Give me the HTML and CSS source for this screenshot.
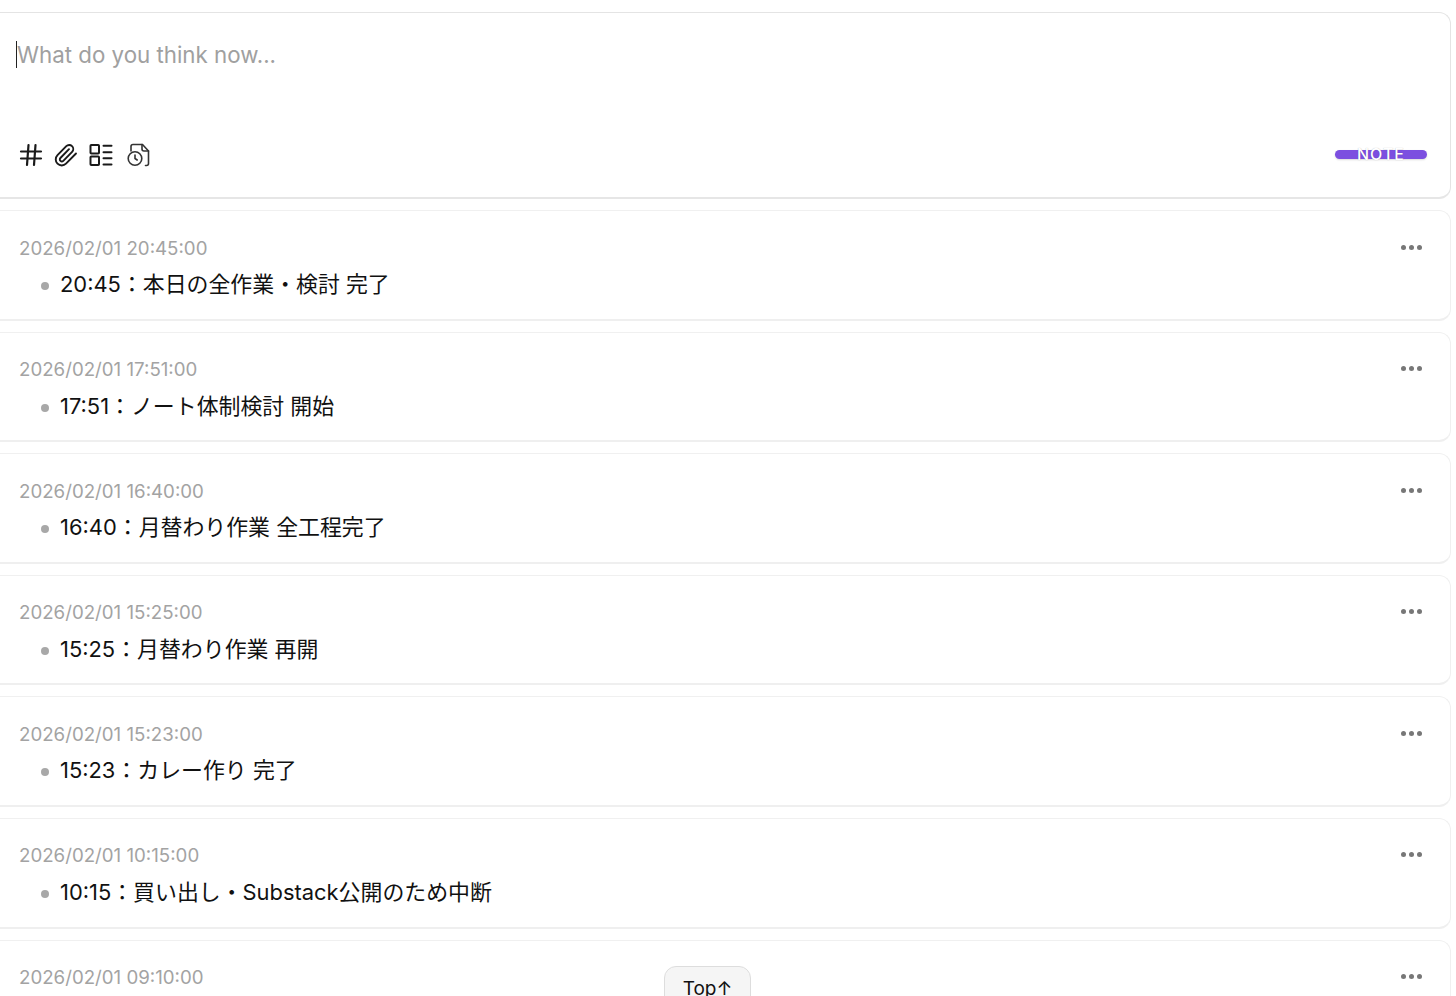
FILE: index.html
```html
<!DOCTYPE html>
<html lang="ja">
<head>
  <meta charset="UTF-8">
  <title>Notes</title>
  <link rel="stylesheet" href="styles.css">
</head>
<body>
  <div class="page">
    <div class="editor">
      <div class="editor-input"><span class="caret"></span><span class="placeholder">What do you think now...</span></div>
      <div class="editor-bar">
        <div class="tools">
          <svg class="tool" viewBox="0 0 24 24" fill="none" stroke="#1a1a1a" stroke-width="2.200" stroke-linecap="round"><path d="M9.500 2 8 22M16.500 2 15 22M2 8.500h20M2 15.500h20"/></svg>
          <svg class="tool" viewBox="0 0 24 24" fill="none" stroke="#1a1a1a" stroke-width="1.900" stroke-linecap="round" stroke-linejoin="round"><path d="m22 10.500-10 10.200a6 6 0 0 1-8.500-8.500l8.800-9a4 4 0 1 1 5.800 5.600l-8.800 9a2 2 0 0 1-2.900-2.800l8.600-8.800"/></svg>
          <svg class="tool" viewBox="0 0 24 24" fill="none" stroke="#1a1a1a" stroke-width="2" stroke-linecap="round"><rect x="1.500" y="2" width="8.500" height="8.500" rx=".8"/><rect x="1.500" y="13.500" width="8.500" height="8.500" rx=".8"/><path d="M14.500 2.800h8M14.500 9.300h8M14.500 15.300h8M14.500 21.500h8"/></svg>
          <svg class="tool tool-file" viewBox="0 0 24 24" fill="none" stroke="#333" stroke-width="1.600" stroke-linecap="round" stroke-linejoin="round"><path d="M4 8V3.500c0-1.200.8-2 2-2h9.500l6 6.500v12.500c0 1.200-.8 2-2 2h-1"/><path d="M15 1.500v4.500c0 1.200.8 2 2 2h4.500"/><circle cx="8" cy="15.500" r="6.800"/><path d="M8 12v3.500l2.200 1.500"/></svg>
        </div>
        <button class="note-btn">NOTE</button>
      </div>
    </div>

    <div class="memo">
      <div class="memo-head"><span class="memo-date">2026/02/01 20:45:00</span><span class="dots"><i></i><i></i><i></i></span></div>
      <ul class="memo-body"><li>20:45：本日の全作業・検討 完了</li></ul>
    </div>
    <div class="memo">
      <div class="memo-head"><span class="memo-date">2026/02/01 17:51:00</span><span class="dots"><i></i><i></i><i></i></span></div>
      <ul class="memo-body"><li>17:51：ノート体制検討 開始</li></ul>
    </div>
    <div class="memo">
      <div class="memo-head"><span class="memo-date">2026/02/01 16:40:00</span><span class="dots"><i></i><i></i><i></i></span></div>
      <ul class="memo-body"><li>16:40：月替わり作業 全工程完了</li></ul>
    </div>
    <div class="memo">
      <div class="memo-head"><span class="memo-date">2026/02/01 15:25:00</span><span class="dots"><i></i><i></i><i></i></span></div>
      <ul class="memo-body"><li>15:25：月替わり作業 再開</li></ul>
    </div>
    <div class="memo">
      <div class="memo-head"><span class="memo-date">2026/02/01 15:23:00</span><span class="dots"><i></i><i></i><i></i></span></div>
      <ul class="memo-body"><li>15:23：カレー作り 完了</li></ul>
    </div>
    <div class="memo">
      <div class="memo-head"><span class="memo-date">2026/02/01 10:15:00</span><span class="dots"><i></i><i></i><i></i></span></div>
      <ul class="memo-body"><li>10:15：買い出し・Substack公開のため中断</li></ul>
    </div>
    <div class="memo">
      <div class="memo-head"><span class="memo-date">2026/02/01 09:10:00</span><span class="dots"><i></i><i></i><i></i></span></div>
    </div>
  </div>
  <button class="top-btn">Top↑</button>
</body>
</html>
```

FILE: styles.css
```css
html, body {
  margin: 0;
  padding: 0;
  height: 996px;
  overflow: hidden;
  background: #fff;
  font-family: Inter, "Noto Sans CJK JP", sans-serif;
  color: #111;
}
.page {
  display: flex;
  flex-direction: column;
  gap: 11px;
  width: 1471px;
  margin-left: -20px;
  padding-top: 12px;
}
.editor {
  height: 187px;
  box-sizing: border-box;
  flex-shrink: 0;
  background: #fff;
  border: 1px solid #e4e4e4;
  border-bottom: 2px solid #e6e6e6;
  border-radius: 12px;
  padding: 23px 23px 0 35px;
}
.editor-input {
  display: flex;
  align-items: center;
  height: 36px;
  font-size: 22.300px;
}
.caret {
  width: 1px;
  height: 27px;
  background: #222;
}
.placeholder {
  color: #a0a0a0;
}
.editor-bar {
  display: flex;
  justify-content: space-between;
  align-items: center;
  margin-top: 71px;
}
.tools {
  display: flex;
  align-items: center;
  gap: 11px;
  padding-left: 3px;
}
.tool {
  width: 24px;
  height: 24px;
  display: block;
}
.tool-file {
  margin-left: 3px;
}
.note-btn {
  width: 92px;
  height: 9px;
  margin-bottom: 2px;
  padding: 0;
  border: 0;
  border-radius: 5px;
  background: #7c4fe0;
  color: #fff;
  font-family: inherit;
  font-size: 16px;
  font-weight: 500;
  letter-spacing: 1px;
  line-height: 9px;
  overflow: visible;
  text-shadow: 0 0 1px rgba(0, 0, 0, 0.3);
  box-shadow: 0 1px 2px rgba(0, 0, 0, 0.15);
}
.memo {
  height: 110.600px;
  box-sizing: border-box;
  flex-shrink: 0;
  background: #fff;
  border: 1px solid #f0f0f0;
  border-bottom: 2px solid #efefef;
  border-radius: 12px;
  padding: 24px 28px 0 38px;
}
.memo-head {
  display: flex;
  justify-content: space-between;
  align-items: center;
  height: 24px;
}
.memo-date {
  padding-top: 2px;
  font-size: 18.700px;
  color: #a3a3a3;
}
.dots {
  display: flex;
  gap: 3px;
}
.dots i {
  width: 5px;
  height: 5px;
  border-radius: 50%;
  background: #777;
}
.memo-body {
  margin: 7px 0 0;
  padding: 0 0 0 41px;
  list-style: none;
  font-size: 21.900px;
  line-height: 36px;
}
.memo-body li {
  position: relative;
}
.memo-body li::before {
  content: "";
  position: absolute;
  left: -19px;
  top: 16px;
  width: 8px;
  height: 8px;
  border-radius: 50%;
  background: #a8a8a8;
}
.top-btn {
  position: fixed;
  left: 664px;
  top: 966px;
  width: 87px;
  height: 50px;
  padding: 10px 0 0;
  box-sizing: border-box;
  border: 1px solid #ddd;
  border-radius: 12px;
  background: #f5f5f5;
  color: #111;
  font-family: inherit;
  font-size: 19px;
  display: flex;
  justify-content: center;
  align-items: flex-start;
}
```
